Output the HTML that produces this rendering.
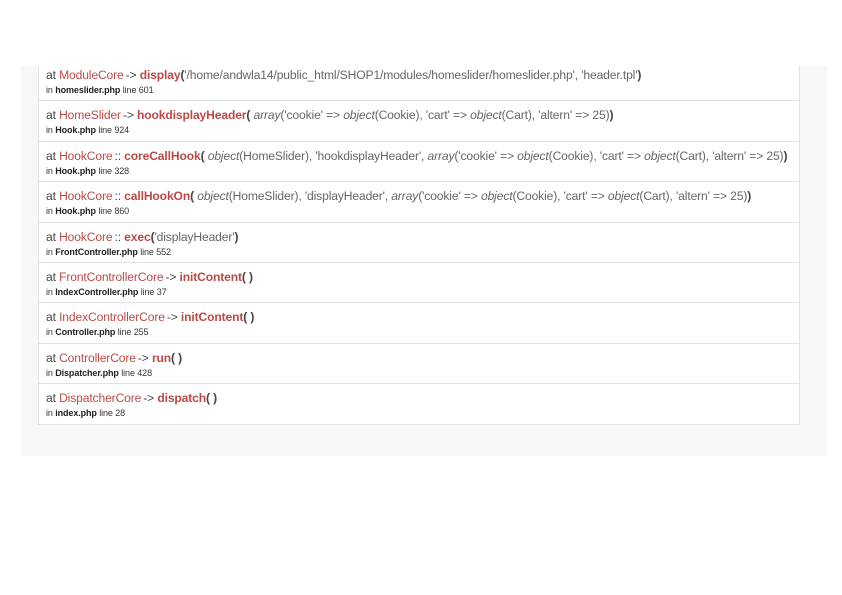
<!DOCTYPE html>
<html><head><meta charset="utf-8"><style>
html,body{margin:0;padding:0;background:#fff;width:842px;height:595px;overflow:hidden;font-family:"Liberation Sans",Arial,sans-serif;}
.panel{position:absolute;left:21px;top:66px;width:806px;height:390px;background:#f7f7f7;overflow:hidden;}
.list{position:absolute;left:17px;top:-5px;width:760px;border:1px solid #e3e3e3;border-top:none;background:#fff;}
.row{height:39.4px;border-top:1px solid #e3e3e3;padding-left:7px;box-sizing:content-box;}
.row:first-child{border-top:none}
.m{font-size:12.1px;color:#444;padding-top:7px;line-height:14px;white-space:nowrap;letter-spacing:-0.13px}
.s{font-size:9px;color:#333;line-height:12px;margin-top:2px;letter-spacing:-0.1px}
.s b{color:#222}
.c{color:#b94a48;margin-right:2px}
.f{color:#b94a48;font-weight:bold}
.p{color:#444;font-weight:bold}
i{color:#666}
.g{color:#666}
</style></head><body>
<div class="panel"><div class="list">
<div class="row"><div class="m">at <span class="c">ModuleCore</span>-&gt; <span class="f">display</span><b class="p">(</b><span class="g">'/home/andwla14/public_html/SHOP1/modules/homeslider/homeslider.php', 'header.tpl'</span><b class="p">)</b></div><div class="s">in <b>homeslider.php</b> line 601</div></div>
<div class="row"><div class="m">at <span class="c">HomeSlider</span>-&gt; <span class="f">hookdisplayHeader</span><b class="p">(</b> <i>array</i><span class="g">('cookie' =&gt; <i>object</i>(Cookie), 'cart' =&gt; <i>object</i>(Cart), 'altern' =&gt; 25)</span><b class="p">)</b></div><div class="s">in <b>Hook.php</b> line 924</div></div>
<div class="row"><div class="m">at <span class="c">HookCore</span>:: <span class="f">coreCallHook</span><b class="p">(</b> <i>object</i><span class="g">(HomeSlider), 'hookdisplayHeader', <i>array</i>('cookie' =&gt; <i>object</i>(Cookie), 'cart' =&gt; <i>object</i>(Cart), 'altern' =&gt; 25)</span><b class="p">)</b></div><div class="s">in <b>Hook.php</b> line 328</div></div>
<div class="row"><div class="m">at <span class="c">HookCore</span>:: <span class="f">callHookOn</span><b class="p">(</b> <i>object</i><span class="g">(HomeSlider), 'displayHeader', <i>array</i>('cookie' =&gt; <i>object</i>(Cookie), 'cart' =&gt; <i>object</i>(Cart), 'altern' =&gt; 25)</span><b class="p">)</b></div><div class="s">in <b>Hook.php</b> line 860</div></div>
<div class="row"><div class="m">at <span class="c">HookCore</span>:: <span class="f">exec</span><b class="p">(</b><span class="g">'displayHeader'</span><b class="p">)</b></div><div class="s">in <b>FrontController.php</b> line 552</div></div>
<div class="row"><div class="m">at <span class="c">FrontControllerCore</span>-&gt; <span class="f">initContent</span><b class="p">( )</b></div><div class="s">in <b>IndexController.php</b> line 37</div></div>
<div class="row"><div class="m">at <span class="c">IndexControllerCore</span>-&gt; <span class="f">initContent</span><b class="p">( )</b></div><div class="s">in <b>Controller.php</b> line 255</div></div>
<div class="row"><div class="m">at <span class="c">ControllerCore</span>-&gt; <span class="f">run</span><b class="p">( )</b></div><div class="s">in <b>Dispatcher.php</b> line 428</div></div>
<div class="row"><div class="m">at <span class="c">DispatcherCore</span>-&gt; <span class="f">dispatch</span><b class="p">( )</b></div><div class="s">in <b>index.php</b> line 28</div></div>
</div></div>
</body></html>
